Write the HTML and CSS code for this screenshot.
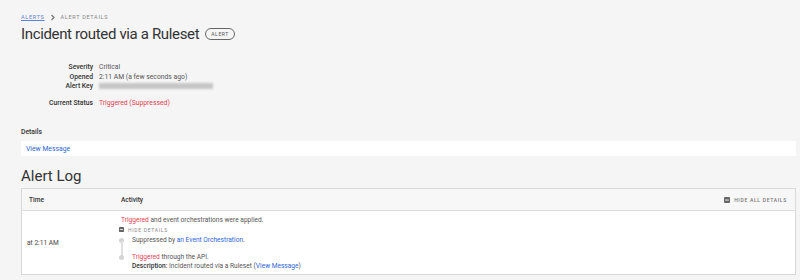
FILE: index.html
```html
<!DOCTYPE html>
<html lang="en">
<head>
    <meta charset="UTF-8">
    <title>Alert Details</title>
    <link rel="stylesheet" href="styles.css">
</head>
<body>
    <div class="page">
        <nav class="crumbs">
            <a href="#" class="crumb-link">ALERTS</a>
            <svg class="chev" width="6" height="7" viewBox="0 0 6 7"><path d="M1.5 1 L4 3.5 L1.5 6" fill="none" stroke="#777" stroke-width="1.3"/></svg>
            <span>ALERT DETAILS</span>
        </nav>

        <div class="title-row">
            <h1>Incident routed via a Ruleset</h1>
            <span class="badge">ALERT</span>
        </div>

        <dl class="facts">
            <dt>Severity</dt><dd>Critical</dd>
            <dt>Opened</dt><dd>2:11 AM (a few seconds ago)</dd>
            <dt>Alert Key</dt><dd><span class="blurred"></span></dd>
            <dt class="status-label">Current Status</dt><dd class="status-label red">Triggered (Suppressed)</dd>
        </dl>

        <h3 class="section-label">Details</h3>
        <div class="details-bar"><a href="#">View Message</a></div>

        <h2 class="log-title">Alert Log</h2>

        <div class="log">
            <div class="log-head">
                <div class="col-time">Time</div>
                <div class="col-activity">Activity</div>
                <div class="toggle-all">
                    <svg width="6" height="6" viewBox="0 0 6 6"><rect width="6" height="6" rx="1" fill="#666"/><rect x="1.2" y="2.6" width="3.6" height="0.9" fill="#fff"/></svg>
                    HIDE ALL DETAILS
                </div>
            </div>
            <div class="log-row">
                <div class="col-time time-cell">at 2:11 AM</div>
                <div class="col-activity">
                    <p><span class="red">Triggered</span> and event orchestrations were applied.</p>
                    <div class="toggle">
                        <svg width="5" height="5" viewBox="0 0 6 6"><rect width="6" height="6" rx="1" fill="#666"/><rect x="1.2" y="2.6" width="3.6" height="0.9" fill="#fff"/></svg>
                        HIDE DETAILS
                    </div>
                    <ul class="timeline">
                        <li>
                            <p>Suppressed by <a href="#">an Event Orchestration</a>.</p>
                        </li>
                        <li>
                            <p><span class="red">Triggered</span> through the API.</p>
                            <p><b>Description:</b> Incident routed via a Ruleset (<a href="#">View Message</a>)</p>
                        </li>
                    </ul>
                </div>
            </div>
        </div>
    </div>
</body>
</html>
```

FILE: styles.css
```css
* {
    box-sizing: border-box;
    margin: 0;
    padding: 0;
}

body {
    background: #f5f5f5;
    font-family: 'Roboto', 'Noto Sans', sans-serif;
    color: #333;
    font-size: 7px;
}

a {
    color: #2c66d8;
    text-decoration: none;
}

.red {
    color: #e33d4f;
}

.page {
    padding: 11px 4px 0 21px;
}

.crumbs {
    display: flex;
    align-items: center;
    gap: 5px;
    font-size: 5.5px;
    letter-spacing: 0.7px;
    color: #888;
    height: 12px;
}

.crumb-link {
    color: #5a82d8;
    text-decoration: underline;
}

.title-row {
    display: flex;
    align-items: center;
    gap: 6px;
    height: 22px;
}

h1 {
    font-size: 15px;
    font-weight: 400;
    letter-spacing: -0.35px;
    color: #333;
}

.badge {
    border: 1px solid #666;
    border-radius: 6px;
    font-size: 5px;
    letter-spacing: 0.6px;
    padding: 1.5px 5px;
    color: #555;
    line-height: 7px;
}

.facts {
    display: grid;
    grid-template-columns: 72px auto;
    column-gap: 6px;
    margin-top: 18px;
    line-height: 9.5px;
    font-size: 6.8px;
}

.facts dt {
    text-align: right;
    font-weight: 500;
    color: #333;
}

.facts dd {
    color: #555;
}

.facts dd.red {
    color: #e33d4f;
}

.facts .status-label {
    margin-top: 7.5px;
}

.blurred {
    display: inline-block;
    width: 114px;
    height: 6px;
    background: #c6c6c6;
    filter: blur(1px);
    vertical-align: middle;
}

.section-label {
    font-size: 6.8px;
    font-weight: 500;
    margin-top: 19px;
    line-height: 9px;
}

.details-bar {
    background: #fff;
    height: 15px;
    margin-top: 4.5px;
    padding: 0 5px;
    display: flex;
    align-items: center;
    font-size: 6.8px;
}

.log-title {
    font-size: 15px;
    font-weight: 400;
    margin-top: 11px;
    line-height: 18px;
}

.log {
    margin-top: 3px;
    border: 1px solid #d8d8d8;
    background: #fff;
    font-size: 6.6px;
}

.log-head {
    display: flex;
    align-items: center;
    background: #f7f7f7;
    border-bottom: 1px solid #dedede;
    height: 22px;
    font-weight: 500;
}

.col-time {
    width: 99px;
    padding-left: 7px;
}

.col-activity {
    flex: 1;
}

.toggle-all {
    display: flex;
    align-items: center;
    gap: 4px;
    font-size: 5px;
    letter-spacing: 0.7px;
    color: #777;
    font-weight: 500;
    padding-right: 8px;
}

.log-row {
    display: flex;
    align-items: center;
    min-height: 63px;
    padding: 4px 0 3px;
}

.time-cell {
    padding-left: 5px;
    color: #444;
}

.log-row .col-activity {
    color: #555;
    line-height: 9px;
}

.toggle {
    display: flex;
    align-items: center;
    gap: 4px;
    margin-left: -2px;
    font-size: 5px;
    letter-spacing: 0.7px;
    color: #888;
    line-height: 10px;
}

.timeline {
    list-style: none;
    margin-top: 1px;
}

.timeline li {
    position: relative;
    padding-left: 11px;
}

.timeline li:first-child {
    padding-bottom: 8px;
}

.timeline li::before {
    content: "";
    position: absolute;
    left: -2px;
    top: 2px;
    width: 5px;
    height: 5px;
    border-radius: 50%;
    background: #d4d4d4;
}

.timeline li:first-child::after {
    content: "";
    position: absolute;
    left: 0;
    top: 5px;
    width: 1.5px;
    height: 17px;
    background: #e0e0e0;
}

.timeline b {
    font-weight: 500;
    color: #333;
}
```
